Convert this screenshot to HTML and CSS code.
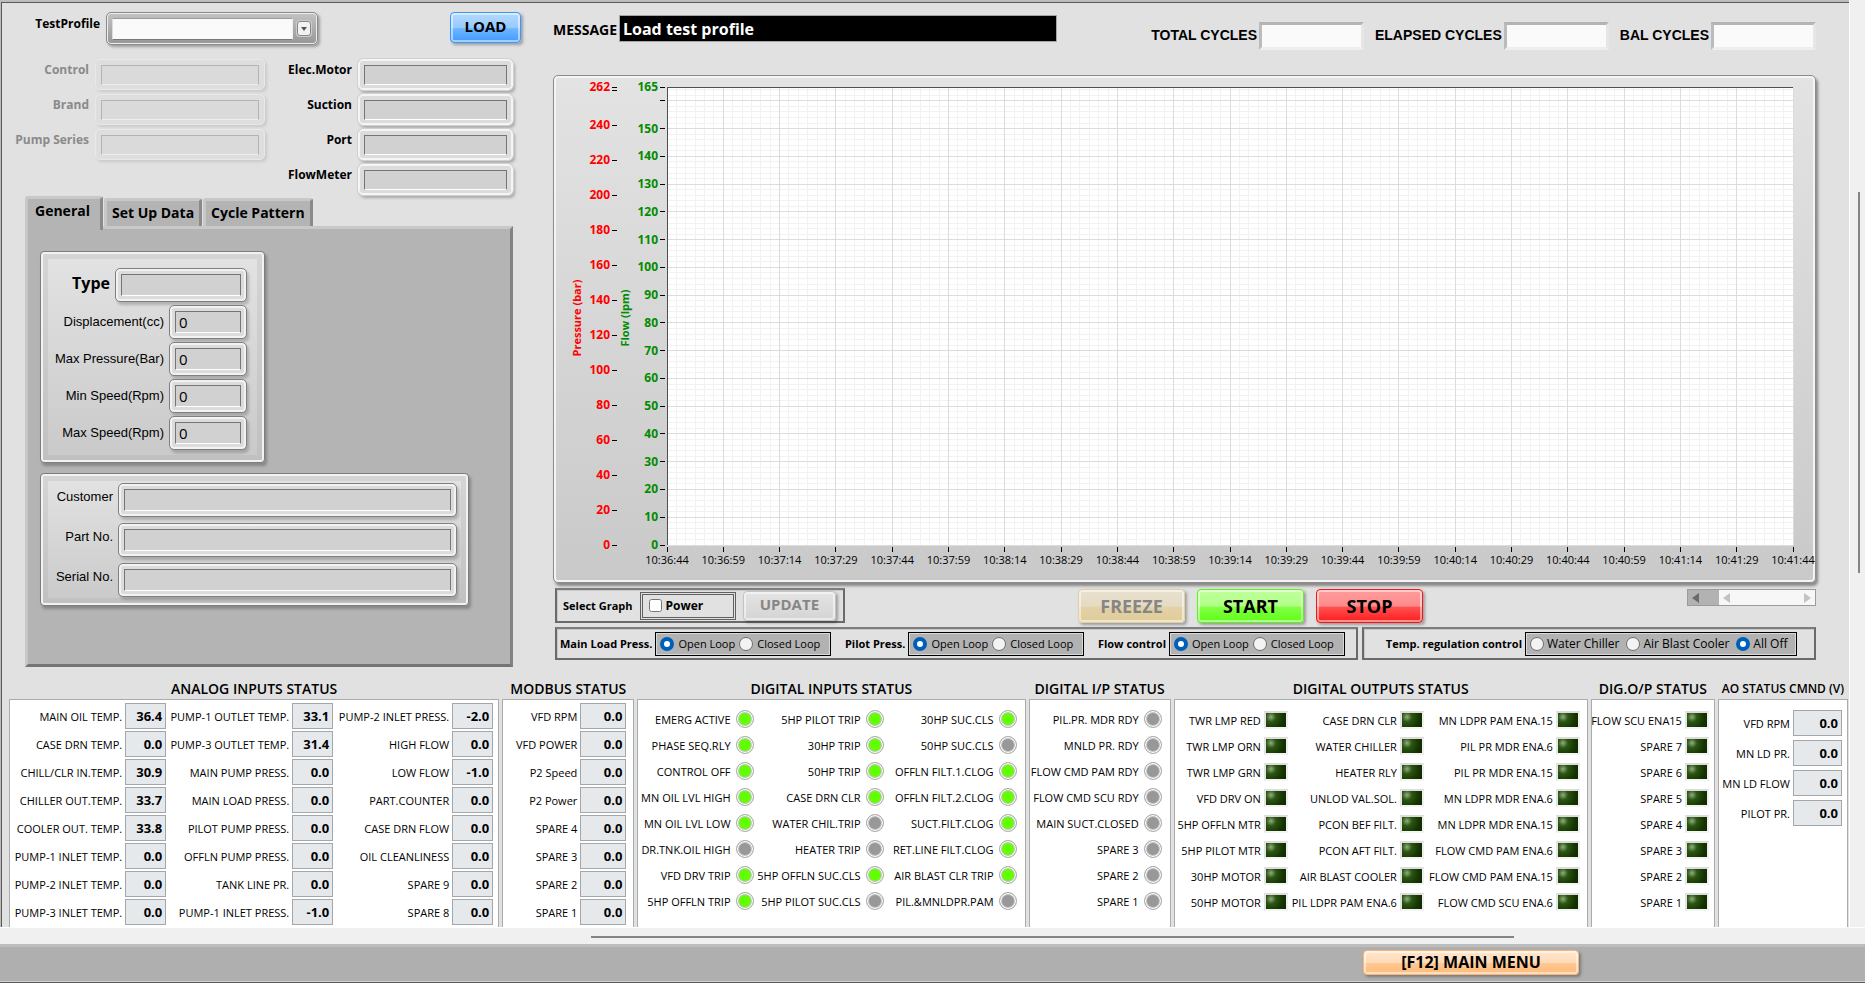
FILE: index.html
```html
<!DOCTYPE html>
<html lang="en">
	<head>
		<meta charset="utf-8">
		<title>Pump Test Bench</title>
		<link rel="stylesheet" href="styles.css">
	</head>
	<body>
		<div class="view">
			<main class="panel">
				<div class="upper">
					<section class="setup">
						<div class="profile">
							<label for="test_profile">TestProfile</label>
							<div class="combo">
								<select id="test_profile"><option></option></select>
								<span class="combo-arrow"><svg width="6" height="4" viewBox="0 0 6 4"><path d="M0 0h6L3 4z" fill="#555"/></svg></span>
							</div>
							<button class="btn blue">LOAD</button>
						</div>

						<div class="fields">
							<div class="field-col disabled">
								<div class="field"><label for="control">Control</label><span class="frame"><input id="control" disabled></span></div>
								<div class="field"><label for="brand">Brand</label><span class="frame"><input id="brand" disabled></span></div>
								<div class="field"><label for="series">Pump Series</label><span class="frame"><input id="series" disabled></span></div>
							</div>
							<div class="field-col">
								<div class="field"><label for="motor">Elec.Motor</label><span class="frame"><input id="motor" readonly></span></div>
								<div class="field"><label for="suction">Suction</label><span class="frame"><input id="suction" readonly></span></div>
								<div class="field"><label for="port">Port</label><span class="frame"><input id="port" readonly></span></div>
								<div class="field"><label for="meter">FlowMeter</label><span class="frame"><input id="meter" readonly></span></div>
							</div>
						</div>

						<div class="tabs">
							<button class="tab active">General</button>
							<button class="tab">Set Up Data</button>
							<button class="tab">Cycle Pattern</button>
						</div>
						<div class="tab-page">
							<div class="group pump">
								<div class="field big"><label for="type">Type</label><span class="frame"><input id="type" readonly></span></div>
								<div class="field"><label for="disp">Displacement(cc)</label><span class="frame"><input id="disp" value="0" readonly></span></div>
								<div class="field"><label for="maxp">Max Pressure(Bar)</label><span class="frame"><input id="maxp" value="0" readonly></span></div>
								<div class="field"><label for="mins">Min Speed(Rpm)</label><span class="frame"><input id="mins" value="0" readonly></span></div>
								<div class="field"><label for="maxs">Max Speed(Rpm)</label><span class="frame"><input id="maxs" value="0" readonly></span></div>
							</div>
							<div class="group customer">
								<div class="field"><label for="cust">Customer</label><span class="frame"><input id="cust" readonly></span></div>
								<div class="field"><label for="part">Part No.</label><span class="frame"><input id="part" readonly></span></div>
								<div class="field"><label for="serial">Serial No.</label><span class="frame"><input id="serial" readonly></span></div>
							</div>
						</div>
					</section>

					<section class="run">
						<div class="topline">
							<label for="message">MESSAGE</label>
							<input id="message" class="message" value="Load test profile" readonly>
							<div class="cycles">
								<div class="cycle"><label for="total">TOTAL CYCLES</label><input id="total"></div>
								<div class="cycle"><label for="elapsed">ELAPSED CYCLES</label><input id="elapsed"></div>
								<div class="cycle"><label for="bal">BAL CYCLES</label><input id="bal"></div>
							</div>
						</div>

						<div class="chart">
							<svg id="plot" class="plot"></svg>
						</div>

						<div class="actions">
							<div class="box select-graph">
								<span class="caption">Select Graph</span>
								<span class="power"><input type="checkbox" id="power"><label for="power">Power</label></span>
								<button class="btn plain" disabled>UPDATE</button>
							</div>
							<div class="buttons">
								<button class="btn tan" disabled>FREEZE</button>
								<button class="btn green">START</button>
								<button class="btn red">STOP</button>
							</div>
							<div class="scroller">
								<button class="thumb" aria-label="Back"><svg width="7" height="10" viewBox="0 0 7 10"><path d="M7 0v10L0 5z" fill="#6a6a6a"/></svg></button>
								<button aria-label="Left"><svg width="7" height="10" viewBox="0 0 7 10"><path d="M7 0v10L0 5z" fill="#c3c3c3"/></svg></button>
								<button class="last" aria-label="Right"><svg width="7" height="10" viewBox="0 0 7 10"><path d="M0 0v10l7-5z" fill="#c3c3c3"/></svg></button>
							</div>
						</div>

						<div class="loops">
							<div class="box loop-box">
								<div class="loop">
									<span class="caption">Main Load Press.</span>
									<span class="radios">
										<input type="radio" name="main" id="main_o" checked><label for="main_o">Open Loop</label>
										<input type="radio" name="main" id="main_c"><label for="main_c">Closed Loop</label>
									</span>
								</div>
								<div class="loop">
									<span class="caption">Pilot Press.</span>
									<span class="radios">
										<input type="radio" name="pilot" id="pilot_o" checked><label for="pilot_o">Open Loop</label>
										<input type="radio" name="pilot" id="pilot_c"><label for="pilot_c">Closed Loop</label>
									</span>
								</div>
								<div class="loop">
									<span class="caption">Flow control</span>
									<span class="radios">
										<input type="radio" name="flow" id="flow_o" checked><label for="flow_o">Open Loop</label>
										<input type="radio" name="flow" id="flow_c"><label for="flow_c">Closed Loop</label>
									</span>
								</div>
							</div>
							<div class="box temp-box">
								<div class="loop">
									<span class="caption">Temp. regulation control</span>
									<span class="radios wide">
										<input type="radio" name="temp" id="temp_w"><label for="temp_w">Water Chiller</label>
										<input type="radio" name="temp" id="temp_a"><label for="temp_a">Air Blast Cooler</label>
										<input type="radio" name="temp" id="temp_o" checked><label for="temp_o">All Off</label>
									</span>
								</div>
							</div>
						</div>
					</section>
				</div>

				<div class="status" id="status"></div>
			</main>
			<div class="vscroll"><div class="vthumb"></div></div>
		</div>
		<div class="hscroll"><div class="hthumb"></div></div>
		<footer class="footer">
			<button class="btn orange">[F12] MAIN MENU</button>
		</footer>
		<script src="script.js"></script>
	</body>
</html>
```
FILE: styles.css
```css
* {
	box-sizing: border-box;
}
body {
	margin: 0;
	min-height: 100vh;
	display: flex;
	flex-direction: column;
	background: #f0f0f0;
	font-family: "Open Sans", "Noto Sans", sans-serif;
	font-size: 12px;
	color: #000;
}
input, select, button {
	font-family: inherit;
	color: inherit;
	border-radius: 0;
}

/* main view */
.view {
	flex: 1;
	display: flex;
	min-height: 0;
}
.panel {
	flex: 1;
	min-width: 0;
	display: flex;
	flex-direction: column;
	background: #e1e1e1;
	border: 2px solid #bdbdbd;
	border-width: 2px 0 0 1px;
	box-shadow: inset 1px 1px 0 #5a5a5a;
	padding: 1px 0 0 1px;
}
.vscroll {
	width: 16px;
	padding: 192px 5px 0 0;
	border-left: 1px solid #fff;
}
.vthumb {
	margin-left: auto;
	width: 2px;
	height: 381px;
	background: #858585;
}
.hscroll {
	height: 17px;
	padding: 8px 351px 0 591px;
	border-top: 1px solid #fff;
}
.hthumb {
	height: 2px;
	background: #858585;
}
.footer {
	height: 39px;
	display: flex;
	justify-content: flex-end;
	align-items: center;
	padding: 0 286px 5px 0;
	background: #afafaf;
	border-top: 3px solid #bdbdbd;
	border-bottom: 1px solid #5a5a5a;
	box-shadow: inset 0 -1px 0 #d0d0d0;
}

.upper {
	display: flex;
}
.setup {
	width: 513px;
	flex: none;
	padding: 9px 0 0 0;
}
.run {
	flex: 1;
	min-width: 0;
	padding: 12px 33px 0 38px;
}

/* buttons */
.btn {
	border: 1px solid #999;
	border-radius: 4px;
	box-shadow: inset 0 0 0 2px rgba(255,255,255,0.5), 2px 2px 3px rgba(0,0,0,0.3);
	font-weight: bold;
	font-size: 18px;
	line-height: 20px;
	padding: 0;
	height: 34px;
	width: 107px;
}
.blue {
	width: 71px;
	height: 31px;
	margin-left: auto;
	padding-bottom: 3px;
	font-size: 15px;
	border-color: #3c98fb;
	background: linear-gradient(#b4dafe, #97caff 50%, #6fb5ff 54%, #419bff);
}
.plain {
	width: 94px;
	height: 30px;
	padding-bottom: 3px;
	font-size: 15px;
	color: #868686;
	border-color: #c4c4c4;
	background: linear-gradient(#e4e4e4, #dcdcdc 50%, #d4d4d4);
}
.tan {
	color: #868686;
	border-color: #e3cfa4;
	background: linear-gradient(#e8e0cf, #e6dcc4 50%, #e3d2a8 54%, #e0cc98);
}
.green {
	border-color: #5bf41a;
	background: linear-gradient(#c2ff9e, #b0ff86 50%, #84ff46 54%, #5dff15);
}
.red {
	border-color: #f01818;
	background: linear-gradient(#ff9c9c, #ff8c8c 50%, #ff5050 54%, #ff1c1c);
}
.orange {
	width: 216px;
	height: 25px;
	font-size: 16px;
	border-color: #f5b87c;
	background: linear-gradient(#ffe6cf, #ffdab6 50%, #ffc894 54%, #ffbb77);
}

/* profile row */
.profile {
	display: flex;
	align-items: flex-start;
	padding-left: 31px;
	width: 519px;
}
.profile label {
	width: 67px;
	text-align: right;
	font-weight: bold;
	line-height: 24px;
	margin-right: 6px;
}
.combo {
	width: 212px;
	height: 33px;
	padding: 5px 6px 5px 5px;
	display: flex;
	align-items: center;
	gap: 4px;
	border: 1px solid #8a8a8a;
	border-radius: 5px;
	background: linear-gradient(#c3c3c3, #979797);
	box-shadow: inset 0 0 0 1px #eee, 2px 2px 3px rgba(0,0,0,0.3);
}
.combo select {
	flex: 1;
	height: 22px;
	appearance: none;
	background: #fafafa;
	border: 1px solid #777;
	border-color: #9a9a9a #eee #777 #ddd;
}
.combo-arrow {
	width: 14px;
	height: 15px;
	border: 1px solid #888;
	border-radius: 3px;
	background: #f2f2f2;
	display: flex;
	align-items: center;
	justify-content: center;
	box-shadow: 0 0 0 1px #ccc;
}

/* indicator fields */
.fields {
	display: flex;
	justify-content: space-between;
	padding: 14px 2px 0 5px;
}
.field {
	display: flex;
	justify-content: flex-end;
	height: 35px;
}
.field label {
	font-weight: bold;
	line-height: 22px;
	margin-right: 6px;
}
.frame {
	width: 155px;
	height: 31px;
	padding: 5px 5px 4px;
	border: 1px solid #f6f6f6;
	border-radius: 5px;
	background: #dcdcdc;
	box-shadow: inset 0 0 0 1px #f4f4f4, 0 0 0 1px #d0d0d0, 2px 3px 3px rgba(0,0,0,0.25);
}
.frame input {
	display: block;
	width: 100%;
	height: 100%;
	padding: 0 3px;
	background: #d1d1d1;
	border: 1px solid #757575;
	border-bottom-color: #fff;
	font-size: 15px;
}
.field-col.disabled {
	width: 258px;
}
.disabled label {
	color: #8a8a8a;
}
.disabled .frame {
	width: 170px;
	background: #dedede;
	border-color: #e9e9e9;
	box-shadow: 2px 2px 3px rgba(0,0,0,0.1);
}
.disabled .frame input {
	background: #dadada;
	border-color: #b3b3b3;
	border-bottom-color: #eee;
}

/* tabs */
.tabs {
	display: flex;
	align-items: flex-end;
	height: 30px;
	margin: -3px 0 0 23px;
	gap: 1px;
}
.tab {
	height: 28px;
	padding: 0 5px 3px;
	font-weight: bold;
	font-size: 14px;
	background: #b4b4b4;
	border: 3px solid;
	border-color: #c8c8c8 #8a8a8a #b4b4b4 #c8c8c8;
	border-bottom: 0;
	border-radius: 3px 3px 0 0;
	white-space: nowrap;
}
.tab.active {
	height: 34px;
	padding: 0 10px 9px 7px;
	margin-bottom: -4px;
	position: relative;
}
.tab-page {
	height: 441px;
	margin: 0 2px 0 23px;
	padding: 22px 12px 0 12px;
	background: #b4b4b4;
	border: 3px solid;
	border-color: #c8c8c8 #828282 #757575 #c8c8c8;
}
.group {
	border: 1px solid #7d7d7d;
	border-radius: 4px;
	background: linear-gradient(#e3e3e3, #c9c9c9);
	box-shadow: inset 0 0 0 2px #f2f2f2, inset 0 0 0 7px rgba(160,160,160,0.2), 2px 3px 3px rgba(0,0,0,0.25);
}
.group label {
	font-family: "Liberation Sans", Arial, sans-serif;
	font-weight: normal;
	font-size: 13px;
	line-height: 34px;
	margin-right: 5px;
}
.group .field {
	height: 37px;
}
.group .frame {
	height: 34px;
	padding: 5px;
	border: 1px solid #808080;
	box-shadow: inset 0 0 0 2px #f2f2f2, 2px 3px 3px rgba(0,0,0,0.2);
}
.pump {
	width: 225px;
	height: 212px;
	padding: 16px 17px 0 0;
}
.pump .frame {
	width: 78px;
}
.pump .big label {
	font-family: inherit;
	font-weight: bold;
	font-size: 16px;
	line-height: 30px;
}
.pump .big .frame {
	width: 132px;
}
.customer {
	width: 429px;
	height: 133px;
	margin-top: 10px;
	padding: 9px 11px 0 0;
}
.customer .field {
	height: 40px;
}
.customer .frame {
	width: 339px;
}
.customer label {
	line-height: 28px;
}

/* message and cycle counters */
.topline {
	display: flex;
	align-items: flex-start;
	height: 60px;
}
.topline > label {
	font-weight: bold;
	font-size: 14px;
	line-height: 30px;
	width: 66px;
}
.message {
	width: 438px;
	height: 27px;
	padding: 0 3px;
	background: #000;
	color: #fff;
	border: 1px solid #a5a5a5;
	font-weight: bold;
	font-size: 16px;
}
.cycles {
	display: flex;
	gap: 11px;
	margin-left: auto;
	padding-top: 7px;
}
.cycle {
	display: flex;
}
.cycle label {
	font-family: "Liberation Sans", Arial, sans-serif;
	font-weight: bold;
	font-size: 14px;
	line-height: 26px;
	margin-right: 2px;
}
.cycle input {
	width: 105px;
	height: 28px;
	background: #fafafa;
	border: 3px solid;
	border-color: #b4b4b4 #e6e6e6 #eee #bbb;
}

/* graph */
.chart {
	height: 508px;
	padding: 11px 22px 0 113px;
	border: 1px solid #8c8c8c;
	border-radius: 5px;
	background: linear-gradient(#e3e3e3, #c9c9c9);
	box-shadow: inset 0 0 0 2px #f4f4f4, 2px 3px 3px rgba(0,0,0,0.4);
}
.plot {
	display: block;
	width: 100%;
	height: 458px;
	overflow: visible;
	background: #fff;
	font-size: 11px;
}
.plot line {
	shape-rendering: crispEdges;
}
.minor { stroke: #f2f2f2; }
.major { stroke: #dcdcdc; }
.edge { stroke: #4f4f4f; }
.tick { stroke: #000; }
.num {
	font-weight: bold;
	font-size: 12px;
	text-anchor: end;
}
.bar { fill: #f00; }
.lpm { fill: #008c00; }
.time { text-anchor: middle; }
.axis {
	font-weight: bold;
	font-size: 11px;
	text-anchor: middle;
}

/* controls below the graph */
.box {
	border: 2px solid #6a6a6a;
	border-top-color: #7d7d7d;
	box-shadow: inset 1px 1px 0 #c8c8c8;
	display: flex;
}
.caption {
	font-weight: bold;
	font-size: 11px;
	white-space: nowrap;
}
.actions {
	display: flex;
	align-items: flex-start;
	margin-left: 2px;
	padding-top: 5px;
	height: 44px;
}
.select-graph {
	width: 290px;
	height: 35px;
	align-items: center;
	padding: 0 7px 0 6px;
	gap: 7px;
}
.power {
	display: flex;
	align-items: center;
	width: 97px;
	height: 28px;
	padding-left: 6px;
	border: 3px double #606060;
	font-weight: bold;
}
.power input {
	width: 13px;
	height: 13px;
	margin: 0 4px 0 0;
}
.buttons {
	display: flex;
	gap: 12px;
	margin: 1px 0 0 auto;
}
.scroller {
	width: 129px;
	height: 17px;
	margin: 1px 0 0 264px;
	display: flex;
	border: 1px solid #9b9b9b;
	background: #f7f7f7;
}
.scroller button {
	border: 0;
	background: none;
	padding: 0 4px;
	line-height: 10px;
}
.scroller .thumb {
	width: 31px;
	background: #b2b2b2;
	text-align: left;
}
.scroller .last {
	margin-left: auto;
}
.loops {
	display: flex;
	gap: 4px;
	margin-left: 2px;
}
.loop-box {
	flex: 1;
	min-width: 0;
	height: 33px;
	justify-content: space-between;
	align-items: center;
	padding: 0 11px 0 3px;
}
.temp-box {
	width: 36%;
	height: 33px;
	align-items: center;
	justify-content: flex-end;
	padding-right: 17px;
}
.loop {
	display: flex;
	align-items: center;
}
.radios {
	display: flex;
	align-items: center;
	width: 176px;
	height: 24px;
	margin-left: 3px;
	padding-left: 4px;
	border: 1px solid #000;
	background: #b2b2b2;
	box-shadow: inset 0 0 0 1px #d8d8d8;
	white-space: nowrap;
	font-size: 11px;
}
.radios.wide {
	width: 272px;
	font-size: 12px;
}
.radios input {
	appearance: none;
	flex: none;
	width: 14px;
	height: 14px;
	margin: 0 4px 0 0;
	border: 1px solid #6f6f6f;
	border-radius: 50%;
	background: #f3f3f3;
}
.radios input:checked {
	border: 4px solid #005fb8;
	background: #fff;
}
.radios label {
	margin-right: 4px;
}
.radios.wide input {
	margin-right: 3px;
}
.radios.wide label {
	margin-right: 7px;
}

/* status blocks */
.status {
	flex: 1;
	display: grid;
	grid-template-columns: minmax(0, 490fr) minmax(0, 132fr) minmax(0, 388fr) minmax(0, 142fr) minmax(0, 414fr) minmax(0, 124fr) minmax(0, 130fr);
	gap: 3px;
	padding: 12px 1px 0 7px;
	font-size: 11px;
}
.block {
	display: flex;
	flex-direction: column;
}
.block h2 {
	margin: 0;
	font-size: 14px;
	font-weight: 600;
	line-height: 20px;
	text-align: center;
	white-space: nowrap;
}
.block.ao h2 {
	font-size: 12px;
}
.block-body {
	flex: 1;
	display: flex;
	justify-content: flex-end;
	background: #fff;
	border: 1px solid #a9abad;
	border-width: 1px 1px 0 1px;
	padding: 3px 5px 0 0;
}
.col {
	display: flex;
	flex-direction: column;
	gap: 2px;
}
.item {
	display: flex;
	justify-content: flex-end;
	align-items: center;
	gap: 3px;
	height: 26px;
	white-space: nowrap;
}
.analog .col:nth-child(2) { width: 167px; }
.analog .col:nth-child(3) { width: 160px; }
.item output {
	width: 41px;
	height: 26px;
	padding-right: 3px;
	line-height: 24px;
	text-align: right;
	font-size: 13px;
	font-weight: bold;
	background: #e6e9ec;
	border: 1px solid #a3a7aa;
}
.modbus .block-body { padding-right: 7px; }
.modbus .item output { width: 46px; }
.ao .item output { width: 49px; }
.ao .col { gap: 4px; padding-top: 7px; }

.round .col { gap: 0; padding-top: 3px; }
.round .item { gap: 5px; }
.round .block-body { padding-right: 8px; }
.inputs .col:nth-child(2) { width: 130px; }
.inputs .col:nth-child(3) { width: 133px; }
.led {
	width: 18px;
	height: 18px;
	border-radius: 50%;
	border: 1px solid #b0b0b0;
	background: #989898;
	box-shadow: inset 0 0 0 1px #fff, inset 0 0 0 2px #c4c4c4;
}
.led.on {
	background: #62ff00;
}
.square .col { gap: 0; padding-top: 4px; }
.square .block-body { padding-right: 5px; }
.outputs .block-body { padding-right: 7px; }
.outputs .col:nth-child(2) { width: 136px; }
.outputs .col:nth-child(3) { width: 156px; }
.lamp {
	width: 24px;
	height: 18px;
	border: 2px solid;
	border-color: #dcdcdc #efefef #f4f4f4 #e4e4e4;
	background: radial-gradient(circle at 5px 4px, #8fae80, #2c5512 5px, #163503 12px, #0f2800);
}
```
FILE: script.js
```js
var SVG = "http://www.w3.org/2000/svg";
var plot = document.getElementById("plot");

function add(parent, tag, attrs, text)
{
	var el = document.createElementNS(SVG, tag);
	for (var k in attrs)
	{
		el.setAttribute(k, attrs[k]);
	}
	if (text !== undefined)
	{
		el.textContent = text;
	}
	parent.appendChild(el);
	return el;
}

function hline(pct, cls)
{
	add(plot, "line", {x1: 0, x2: "100%", y1: pct + "%", y2: pct + "%", "class": cls});
}

function vline(pct, cls)
{
	add(plot, "line", {x1: pct + "%", x2: pct + "%", y1: 0, y2: "100%", "class": cls});
}

function level(value, max)
{
	return 100 - value / max * 100;
}

function drawGrid()
{
	var i;
	for (i = 0; i < 165; i += 2) hline(level(i, 165), "minor");
	for (i = 0; i <= 120; i++) vline(i / 1.2, "minor");
	for (i = 0; i < 165; i += 10) hline(level(i, 165), "major");
	for (i = 0; i <= 20; i++) vline(i * 5, "major");
	hline(0, "edge");
	vline(0, "edge");
}

function drawScale(max, step, x, cls)
{
	var values = [max];
	for (var v = 0; v < max; v += step) values.push(v);
	values.forEach(function(v)
	{
		var y = level(v, max) + "%";
		add(plot, "line", {x1: x, x2: x + 5, y1: y, y2: y, "class": "tick"});
		// no number where it would run into the top one
		if (v == max || max - v > step / 2 + 1)
		{
			add(plot, "text", {x: x - 2, y: y, dy: 4, "class": "num " + cls}, v);
		}
	});
}

function drawTimes()
{
	var start = 10 * 3600 + 36 * 60 + 44;
	for (var i = 0; i <= 20; i++)
	{
		var t = start + i * 15;
		var text = [Math.floor(t / 3600), Math.floor(t / 60) % 60, t % 60].map(function(n)
		{
			return n < 10 ? "0" + n : n;
		}).join(":");
		add(plot, "text", {x: i * 5 + "%", y: "100%", dy: 19, "class": "time"}, text);
		// ticks hang below the plot
		var mark = add(plot, "svg", {x: i * 5 + "%", y: "100%", width: 1, height: 8, overflow: "visible"});
		add(mark, "line", {y1: 2, y2: 7, "class": "tick"});
	}
}

drawGrid();
drawScale(262, 20, -55, "bar");
drawScale(165, 10, -7, "lpm");
drawTimes();
add(plot, "text", {transform: "translate(-86 231) rotate(-90)", "class": "axis bar"}, "Pressure (bar)");
add(plot, "text", {transform: "translate(-38 231) rotate(-90)", "class": "axis lpm"}, "Flow (lpm)");

var blocks = [
	{title: "ANALOG INPUTS STATUS", cls: "analog", cols: [
		[["MAIN OIL TEMP.", "36.4"], ["CASE DRN TEMP.", "0.0"], ["CHILL/CLR IN.TEMP.", "30.9"], ["CHILLER OUT.TEMP.", "33.7"], ["COOLER OUT. TEMP.", "33.8"], ["PUMP-1 INLET TEMP.", "0.0"], ["PUMP-2 INLET TEMP.", "0.0"], ["PUMP-3 INLET TEMP.", "0.0"]],
		[["PUMP-1 OUTLET TEMP.", "33.1"], ["PUMP-3 OUTLET TEMP.", "31.4"], ["MAIN PUMP PRESS.", "0.0"], ["MAIN LOAD PRESS.", "0.0"], ["PILOT PUMP PRESS.", "0.0"], ["OFFLN PUMP PRESS.", "0.0"], ["TANK LINE PR.", "0.0"], ["PUMP-1 INLET PRESS.", "-1.0"]],
		[["PUMP-2 INLET PRESS.", "-2.0"], ["HIGH FLOW", "0.0"], ["LOW FLOW", "-1.0"], ["PART.COUNTER", "0.0"], ["CASE DRN FLOW", "0.0"], ["OIL CLEANLINESS", "0.0"], ["SPARE 9", "0.0"], ["SPARE 8", "0.0"]]
	]},
	{title: "MODBUS STATUS", cls: "modbus", cols: [
		[["VFD RPM", "0.0"], ["VFD POWER", "0.0"], ["P2 Speed", "0.0"], ["P2 Power", "0.0"], ["SPARE 4", "0.0"], ["SPARE 3", "0.0"], ["SPARE 2", "0.0"], ["SPARE 1", "0.0"]]
	]},
	{title: "DIGITAL INPUTS STATUS", cls: "inputs round", cols: [
		[["EMERG ACTIVE", 1], ["PHASE SEQ.RLY", 1], ["CONTROL OFF", 1], ["MN OIL LVL HIGH", 1], ["MN OIL LVL LOW", 1], ["DR.TNK.OIL HIGH", 0], ["VFD DRV TRIP", 1], ["5HP OFFLN TRIP", 1]],
		[["5HP PILOT TRIP", 1], ["30HP TRIP", 1], ["50HP TRIP", 1], ["CASE DRN CLR", 1], ["WATER CHIL.TRIP", 0], ["HEATER TRIP", 0], ["5HP OFFLN SUC.CLS", 1], ["5HP PILOT SUC.CLS", 0]],
		[["30HP SUC.CLS", 1], ["50HP SUC.CLS", 0], ["OFFLN FILT.1.CLOG", 1], ["OFFLN FILT.2.CLOG", 1], ["SUCT.FILT.CLOG", 1], ["RET.LINE FILT.CLOG", 1], ["AIR BLAST CLR TRIP", 1], ["PIL.&MNLDPR.PAM", 0]]
	]},
	{title: "DIGITAL I/P STATUS", cls: "round", cols: [
		[["PIL.PR. MDR RDY", 0], ["MNLD PR. RDY", 0], ["FLOW CMD PAM RDY", 0], ["FLOW CMD SCU RDY", 0], ["MAIN SUCT.CLOSED", 0], ["SPARE 3", 0], ["SPARE 2", 0], ["SPARE 1", 0]]
	]},
	{title: "DIGITAL OUTPUTS STATUS", cls: "outputs square", cols: [
		[["TWR LMP RED"], ["TWR LMP ORN"], ["TWR LMP GRN"], ["VFD DRV ON"], ["5HP OFFLN MTR"], ["5HP PILOT MTR"], ["30HP MOTOR"], ["50HP MOTOR"]],
		[["CASE DRN CLR"], ["WATER CHILLER"], ["HEATER RLY"], ["UNLOD VAL.SOL."], ["PCON BEF FILT."], ["PCON AFT FILT."], ["AIR BLAST COOLER"], ["PIL LDPR PAM ENA.6"]],
		[["MN LDPR PAM ENA.15"], ["PIL PR MDR ENA.6"], ["PIL PR MDR ENA.15"], ["MN LDPR MDR ENA.6"], ["MN LDPR MDR ENA.15"], ["FLOW CMD PAM ENA.6"], ["FLOW CMD PAM ENA.15"], ["FLOW CMD SCU ENA.6"]]
	]},
	{title: "DIG.O/P STATUS", cls: "square", cols: [
		[["FLOW SCU ENA15"], ["SPARE 7"], ["SPARE 6"], ["SPARE 5"], ["SPARE 4"], ["SPARE 3"], ["SPARE 2"], ["SPARE 1"]]
	]},
	{title: "AO STATUS CMND (V)", cls: "ao", cols: [
		[["VFD RPM", "0.0"], ["MN LD PR.", "0.0"], ["MN LD FLOW", "0.0"], ["PILOT PR.", "0.0"]]
	]}
];

function mark(item)
{
	if (item.length == 1) return '<i class="lamp"></i>';
	if (item[1] === 0) return '<i class="led"></i>';
	if (item[1] === 1) return '<i class="led on"></i>';
	return '<output>' + item[1] + '</output>';
}

var output = '';
blocks.forEach(function(b)
{
	output += '<section class="block ' + b.cls + '"><h2>' + b.title + '</h2><div class="block-body">';
	b.cols.forEach(function(col)
	{
		output += '<div class="col">';
		col.forEach(function(item)
		{
			output += '<div class="item"><span>' + item[0].replace('&', '&amp;') + '</span>' + mark(item) + '</div>';
		});
		output += '</div>';
	});
	output += '</div></section>';
});
document.getElementById('status').innerHTML = output;
```
